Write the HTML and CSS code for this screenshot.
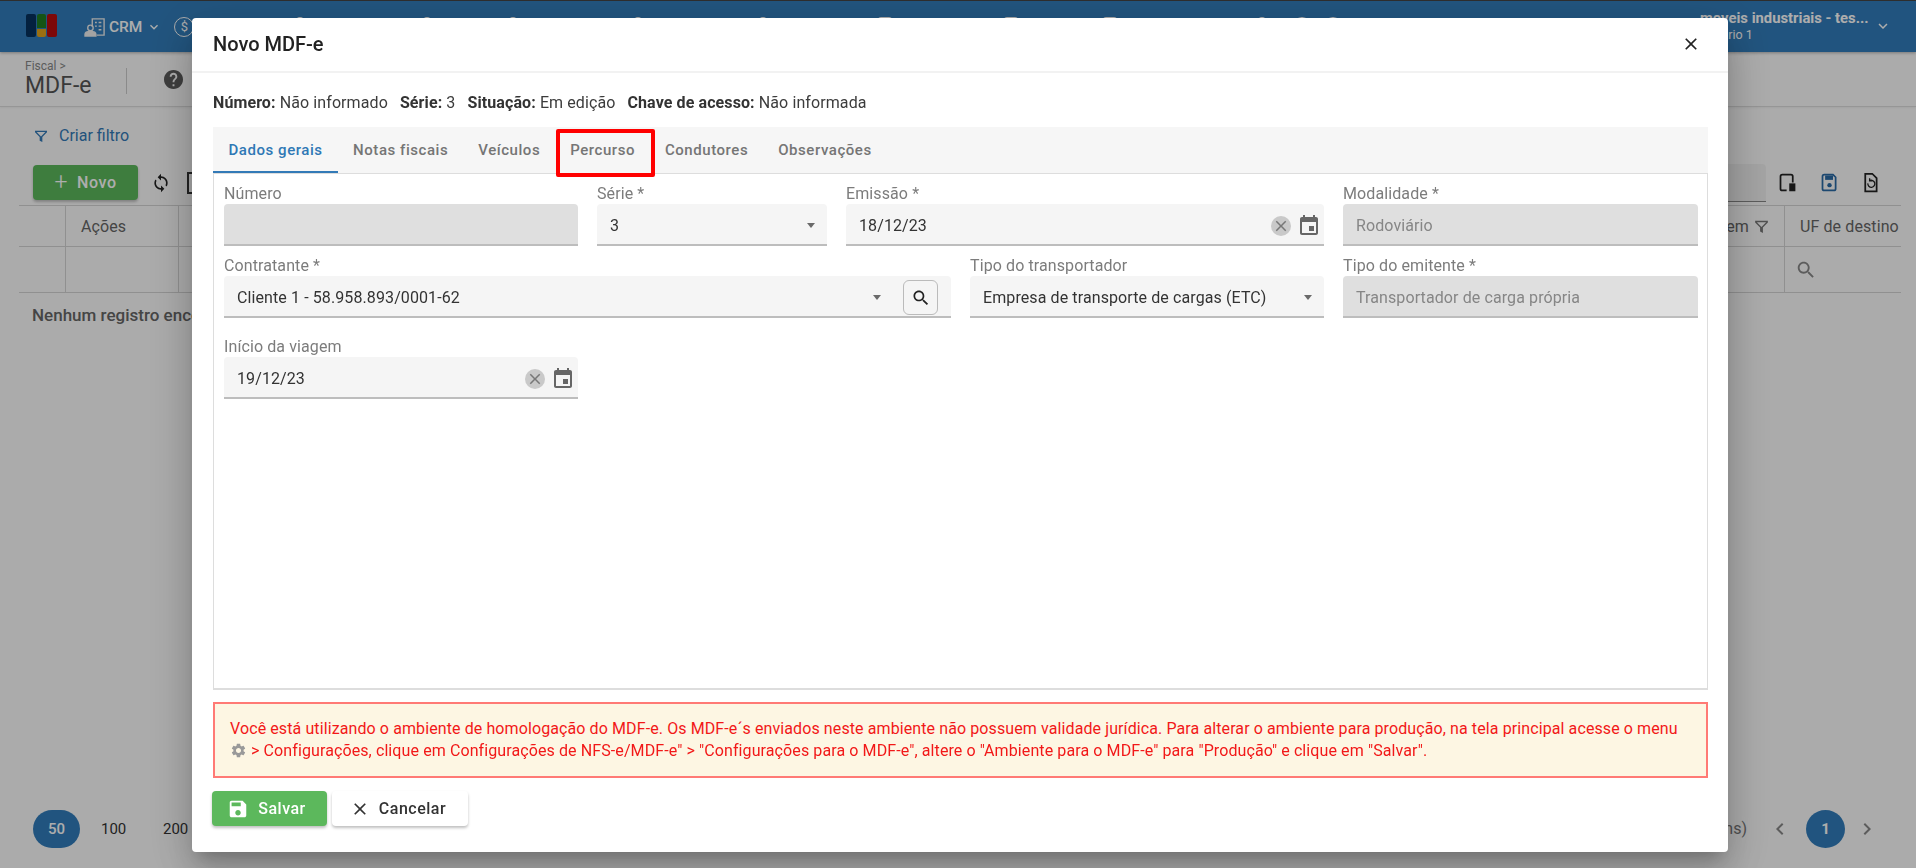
FILE: index.html
```html
<!DOCTYPE html>
<html lang="pt-BR">
<head>
<meta charset="utf-8">
<title>Novo MDF-e</title>
<link rel="stylesheet" href="styles.css">
</head>
<body>
<svg class="sprite" width="0" height="0" aria-hidden="true">
  <symbol id="i-event" viewBox="0 0 24 24"><path d="M17 12h-5v5h5v-5zM16 1v2H8V1H6v2H5c-1.11 0-1.99.9-1.99 2L3 19c0 1.1.89 2 2 2h14c1.1 0 2-.9 2-2V5c0-1.1-.9-2-2-2h-1V1h-2zm3 18H5V8h14v11z"/></symbol>
  <symbol id="i-search" viewBox="0 0 24 24"><path d="M15.5 14h-.79l-.28-.27C15.41 12.59 16 11.11 16 9.5 16 5.91 13.09 3 9.5 3S3 5.91 3 9.5 5.91 16 9.5 16c1.61 0 3.09-.59 4.23-1.57l.27.28v.79l5 4.99L20.49 19l-4.99-5zm-6 0C7.01 14 5 11.99 5 9.5S7.01 5 9.5 5 14 7.01 14 9.5 11.99 14 9.5 14z"/></symbol>
  <symbol id="i-close" viewBox="0 0 24 24"><path d="M19 6.41L17.59 5 12 10.59 6.41 5 5 6.41 10.59 12 5 17.59 6.41 19 12 13.41 17.59 19 19 17.59 13.41 12z"/></symbol>
  <symbol id="i-save" viewBox="0 0 24 24"><path d="M17 3H5c-1.11 0-2 .9-2 2v14c0 1.1.89 2 2 2h14c1.1 0 2-.9 2-2V7l-4-4zm-5 16c-1.66 0-3-1.34-3-3s1.34-3 3-3 3 1.34 3 3-1.34 3-3 3zm3-10H5V5h10v4z"/></symbol>
  <symbol id="i-filter" viewBox="0 0 24 24"><path d="M3 4h18v2.200l-7 7.300V21l-4-2v-5.500L3 6.200V4zm2.500 2 6.500 6.700L18.500 6h-13zM12 15v3.500l.01.01L12 15z"/></symbol>
  <symbol id="i-chev" viewBox="0 0 24 24"><path d="M7.410 8.590 12 13.170l4.590-4.580L18 10l-6 6-6-6z"/></symbol>
</svg>

<div class="page">
  <header class="topbar">
    <div class="logo"><span class="logo-a"></span><span class="logo-b"><i></i><b></b></span><span class="logo-c"></span></div>
    <nav class="menu">
      <svg class="crm-icon" viewBox="0 0 24 22" fill="none" stroke="currentColor" stroke-width="1.500"><path d="M9 11V2h13v18h-8"/><path d="M12 6h2M16 6h3M12 10h2M16 10h3M16 14h3"/><circle cx="7" cy="12" r="3"/><path d="M1 21v-2c0-2 3-3 6-3s6 1 6 3v2z" fill="currentColor"/></svg>
      <span class="menu-label">CRM</span>
      <svg class="menu-chev"><use href="#i-chev"/></svg>
      <span class="money">$</span>
    </nav>
    <div class="peeks">
      <i class="peek"></i><i class="peek"></i><i class="peek"></i><i class="peek"></i><i class="peek"></i><i class="peek wide"></i><i class="peek wide"></i><i class="peek wide"></i><i class="peek"></i><i class="peek ring"></i><i class="peek ring"></i>
    </div>
    <div class="user">
      <div class="user-text">
        <strong>moveis industriais - tes...</strong>
        <span>Usuário 1</span>
      </div>
      <svg class="user-chev"><use href="#i-chev"/></svg>
    </div>
  </header>

  <section class="subhead">
    <div class="crumb"><small>Fiscal &gt;</small><h1>MDF-e</h1></div>
    <span class="vline"></span>
    <svg class="help" viewBox="2 2 20 20"><path d="M12 2C6.480 2 2 6.480 2 12s4.480 10 10 10 10-4.480 10-10S17.520 2 12 2zm1 17h-2v-2h2v2zm2.070-7.750-.9.920C13.450 12.900 13 13.500 13 15h-2v-.5c0-1.100.450-2.100 1.170-2.830l1.240-1.260c.37-.36.59-.86.59-1.410 0-1.100-.9-2-2-2s-2 .9-2 2H8c0-2.210 1.790-4 4-4s4 1.790 4 4c0 .88-.36 1.680-.93 2.250z"/></svg>
  </section>

  <div class="filter-row">
    <svg class="funnel"><use href="#i-filter"/></svg>
    <span>Criar filtro</span>
  </div>

  <div class="toolbar">
    <button class="btn-novo" type="button"><span class="plus">+</span>Novo</button>
    <svg class="tool-sync" viewBox="0 0 24 24"><path d="M12 4V1L8 5l4 4V6c3.310 0 6 2.690 6 6 0 1.010-.25 1.970-.7 2.800l1.460 1.460C19.540 15.030 20 13.570 20 12c0-4.420-3.580-8-8-8zm0 14c-3.310 0-6-2.690-6-6 0-1.010.25-1.970.7-2.800L5.240 7.740C4.460 8.970 4 10.430 4 12c0 4.420 3.580 8 8 8v3l4-4-4-4v3z"/></svg>
    <span class="tool-box"></span>
    <span class="search-field"></span>
    <svg class="tool-ic first" viewBox="0 0 24 24" stroke="#222" stroke-width="2"><path d="M11 21H6a2 2 0 0 1-2-2V5a2 2 0 0 1 2-2h10a2 2 0 0 1 2 2v7"/><rect class="solid" x="14" y="13" width="7" height="9" stroke="none"/></svg>
    <svg class="tool-ic blue" viewBox="0 0 24 24" stroke="#2a6aa5" stroke-width="2"><path d="M6 3h10l3 3v13a2 2 0 0 1-2 2H6a2 2 0 0 1-2-2V5a2 2 0 0 1 2-2z"/><path class="solid-blue" d="M7 4h9v5H7z" stroke="none"/><circle class="solid-blue" cx="12" cy="15" r="2.500" stroke="none"/></svg>
    <svg class="tool-ic end" viewBox="0 0 24 24" stroke="#222" stroke-width="2"><path d="M6 2h8l5 5v15H6z"/><path stroke-width="1.500" d="M9 13a4 4 0 1 0 2-3M11 7v3h3"/></svg>
  </div>

  <div class="table">
    <div class="th"></div>
    <div class="th">Ações</div>
    <div class="th"></div>
    <div class="th th-end">UF de origem <svg class="th-funnel"><use href="#i-filter"/></svg></div>
    <div class="th last">UF de destino</div>
    <div class="td"></div>
    <div class="td"></div>
    <div class="td"></div>
    <div class="td"></div>
    <div class="td last"><svg class="td-search"><use href="#i-search"/></svg></div>
  </div>
  <p class="empty">Nenhum registro encontrado</p>

  <footer class="pager">
    <span class="pill">50</span>
    <span class="size">100</span>
    <span class="size">200</span>
    <span class="total">(0 itens)</span>
    <svg class="arrow" viewBox="0 0 24 24"><path d="M15.410 7.410 14 6l-6 6 6 6 1.410-1.410L10.830 12z"/></svg>
    <span class="page-no">1</span>
    <svg class="arrow" viewBox="0 0 24 24"><path d="M10 6 8.590 7.410 13.170 12l-4.580 4.590L10 18l6-6z"/></svg>
  </footer>
</div>

<div class="overlay"></div>

<div class="modal" role="dialog">
  <div class="modal-head">
    <h2>Novo MDF-e</h2>
    <svg class="modal-x"><use href="#i-close"/></svg>
  </div>
  <div class="modal-body">
    <p class="info">
      <span><b>Número:</b> Não informado</span>
      <span><b>Série:</b> 3</span>
      <span><b>Situação:</b> Em edição</span>
      <span><b>Chave de acesso:</b> Não informada</span>
    </p>

    <div class="tabs">
      <span class="tab active">Dados gerais</span>
      <span class="tab">Notas fiscais</span>
      <span class="tab">Veículos</span>
      <span class="tab">Percurso</span>
      <span class="tab">Condutores</span>
      <span class="tab">Observações</span>
      <span class="mark"></span>
    </div>

    <div class="panel">
      <div class="form">
        <div class="field">
          <label>Número</label>
          <div class="control off"></div>
        </div>
        <div class="field">
          <label>Série *</label>
          <div class="control"><span class="val">3</span><i class="caret"></i></div>
        </div>
        <div class="field s2">
          <label>Emissão *</label>
          <div class="control"><span class="val">18/12/23</span><span class="clear"><svg><use href="#i-close"/></svg></span><svg class="cal"><use href="#i-event"/></svg></div>
        </div>
        <div class="field">
          <label>Modalidade *</label>
          <div class="control off"><span class="val">Rodoviário</span></div>
        </div>

        <div class="field s3">
          <label>Contratante *</label>
          <div class="control"><span class="val">Cliente 1 - 58.958.893/0001-62</span><i class="caret"></i><button class="find" type="button"><svg><use href="#i-search"/></svg></button></div>
        </div>
        <div class="field">
          <label>Tipo do transportador</label>
          <div class="control"><span class="val">Empresa de transporte de cargas (ETC)</span><i class="caret"></i></div>
        </div>
        <div class="field">
          <label>Tipo do emitente *</label>
          <div class="control off"><span class="val">Transportador de carga própria</span></div>
        </div>

        <div class="field third">
          <label>Início da viagem</label>
          <div class="control"><span class="val">19/12/23</span><span class="clear"><svg><use href="#i-close"/></svg></span><svg class="cal"><use href="#i-event"/></svg></div>
        </div>
      </div>
    </div>

    <div class="alert">
      <p>Você está utilizando o ambiente de homologação do MDF-e. Os MDF-e´s enviados neste ambiente não possuem validade jurídica. Para alterar o ambiente para produção, na tela principal acesse o menu</p>
      <p><svg class="gear" viewBox="0 0 24 24"><path d="M19.140 12.940c.04-.3.06-.61.06-.94 0-.32-.02-.64-.07-.94l2.030-1.580c.18-.14.23-.41.12-.61l-1.920-3.320c-.12-.22-.37-.29-.59-.22l-2.390.96c-.5-.38-1.030-.7-1.620-.94l-.36-2.540c-.04-.24-.24-.41-.48-.41h-3.840c-.24 0-.43.17-.47.41l-.36 2.540c-.59.24-1.130.57-1.620.94l-2.390-.96c-.22-.08-.47 0-.59.22L2.740 8.870c-.12.21-.08.47.12.61l2.030 1.580c-.05.3-.09.63-.09.94s.02.64.07.94l-2.030 1.580c-.18.14-.23.41-.12.61l1.920 3.320c.12.22.37.29.59.22l2.390-.96c.5.38 1.030.7 1.620.94l.36 2.540c.05.24.24.41.48.41h3.840c.24 0 .44-.17.47-.41l.36-2.540c.59-.24 1.130-.56 1.620-.94l2.390.96c.22.08.47 0 .59-.22l1.920-3.320c.12-.22.07-.47-.12-.61l-2.010-1.580zM12 15.600c-1.980 0-3.600-1.620-3.600-3.600s1.620-3.600 3.600-3.600 3.600 1.620 3.600 3.600-1.620 3.600-3.600 3.600z"/></svg> &gt; Configurações, clique em Configurações de NFS-e/MDF-e" &gt; "Configurações para o MDF-e", altere o "Ambiente para o MDF-e" para "Produção" e clique em "Salvar".</p>
    </div>

    <div class="actions">
      <button class="btn-save" type="button"><svg><use href="#i-save"/></svg>Salvar</button>
      <button class="btn-cancel" type="button"><svg><use href="#i-close"/></svg>Cancelar</button>
    </div>
  </div>
</div>
</body>
</html>
```

FILE: styles.css
```css
* { box-sizing: border-box; }
html, body { margin: 0; height: 100%; overflow: hidden; }
body { font-family: Roboto, "Liberation Sans", sans-serif; color: #333; background: #fff; }
p, h1, h2 { margin: 0; font-weight: 400; }
button { font-family: inherit; border: 0; cursor: pointer; }
.sprite { position: absolute; }

/* ---------- page behind the dialog ---------- */
.page { height: 868px; display: flex; flex-direction: column; background: #fdfdfd; }

.topbar {
  height: 52px; flex: none; display: flex; align-items: center;
  padding: 0 24px 0 26px; background: #327dbb; border-top: 1px solid #444;
  color: #fff; box-shadow: 0 1px 3px rgba(0,0,0,.3); position: relative;
}
.logo { display: flex; gap: 1px; width: 31px; height: 23px; margin-top: -2px; flex: none; }
.logo-a, .logo-c { display: block; width: 10px; border-radius: 2px; }
.logo-a { background: #06325e; }
.logo-c { background: #b80c0c; }
.logo-b { display: flex; flex-direction: column; gap: 1px; width: 9px; }
.logo-b i { flex: 1 1 65%; background: #1f7d1f; display: block; border-radius: 2px 2px 0 0; }
.logo-b b { flex: 1 1 35%; background: #e3a21a; display: block; border-radius: 0 0 2px 2px; }

.menu { display: flex; align-items: center; margin-left: 27px; width: 125px; flex: none; }
.crm-icon { width: 22px; height: 20px; color: #f0f0f0; flex: none; }
.menu-label { margin-left: 3px; font-size: 15.500px; font-weight: 500; }
.menu-chev { width: 16px; height: 16px; margin-left: 4px; fill: #fff; }
.money {
  width: 20px; height: 20px; margin-left: 12px; border: 1.500px solid #fff; border-radius: 50%;
  font-size: 13px; line-height: 17px; text-align: center; flex: none;
}
.peeks {
  flex: 1; display: grid; margin-left: 87px;
  grid-template-columns: 127px 86px 125px 125px 119px 126px 99px 155px 35px 31px 20px;
}
.peek { display: block; width: 8px; height: 20px; background: #fff; border-radius: 4px; }
.peek.wide { width: 14px; border-radius: 3px; }
.peek.ring { width: 18px; height: 18px; background: none; border: 2px solid #fff; border-radius: 50%; }

.user { display: flex; align-items: center; gap: 2px; margin-top: -2px; }
.user-text { width: 172px; display: flex; flex-direction: column; }
.user-text strong { font-size: 14.800px; font-weight: 700; line-height: 18px; white-space: nowrap; }
.user-text span { font-size: 12.500px; line-height: 15px; }
.user-chev { width: 18px; height: 18px; fill: #fff; }

.subhead {
  height: 55px; flex: none; display: flex; align-items: center; padding-left: 25px;
  background: #fdfdfd; border-bottom: 1px solid #ddd; box-shadow: 0 1px 2px rgba(0,0,0,.06);
}
.crumb { width: 101px; }
.crumb small { display: block; font-size: 12px; line-height: 13px; color: #888; }
.crumb h1 { font-size: 23px; line-height: 26px; color: #555; }
.vline { width: 1px; height: 26px; background: #ccc; margin-top: 4px; }
.help { width: 19px; height: 19px; margin-left: 37px; fill: #5c5c5c; }

.filter-row {
  height: 57px; flex: none; display: flex; align-items: center; gap: 10px; padding-left: 33px;
  font-size: 16px; color: #337ab7;
}
.funnel { width: 16px; height: 16px; fill: #337ab7; }

.toolbar { height: 41px; flex: none; display: flex; align-items: flex-start; padding-left: 33px; }
.btn-novo {
  width: 105px; height: 35px; background: #5cb85c; color: #fff; border-radius: 4px; font-size: 16px;
  font-weight: 500; letter-spacing: .6px; display: flex; align-items: center; justify-content: center; gap: 9px;
  box-shadow: 0 2px 3px rgba(0,0,0,.25); margin-top: 1px;
}
.plus { font-size: 23px; font-weight: 300; line-height: 20px; }
.tool-sync { width: 20px; height: 20px; margin: 9px 0 0 13px; fill: #222; }
.tool-box { width: 14px; height: 22px; margin: 8px 0 0 16px; border: 2px solid #333; }
.search-field { margin-left: auto; width: 350px; height: 38px; background: #f2f2f2; border-bottom: 1px solid #888; border-radius: 4px 4px 0 0; }
.tool-ic { width: 21px; height: 21px; margin-top: 8px; fill: none; flex: none; }
.tool-ic.first { margin-left: 11px; }
.tool-ic.blue { margin-left: 21px; }
.tool-ic.end { margin: 8px 35px 0 20px; }
.solid { fill: #222; }
.solid-blue { fill: #2a6aa5; }

.table {
  margin: 0 15px 0 19px; display: grid; flex: none;
  grid-template-columns: 47px 113px 1fr 145px 116px;
  grid-template-rows: 41px 46px;
  border-top: 1px solid #d5d5d5;
}
.th, .td {
  border-right: 1px solid #d5d5d5; border-bottom: 1px solid #d5d5d5; padding: 0 15px;
  display: flex; align-items: center; font-size: 16px; letter-spacing: .1px; color: #666; white-space: nowrap; overflow: hidden;
}
.th.last, .td.last { border-right: 0; }
.th-end { gap: 4px; justify-content: flex-end; padding: 0 14px 0 0; }
.th-funnel { width: 17px; height: 17px; fill: #777; flex: none; }
.td-search { width: 22px; height: 22px; fill: #888; margin-left: -5px; }
.empty { margin: 12px 0 0 32px; font-size: 17px; line-height: 20px; font-weight: 500; color: #666; }

.pager { margin-top: auto; height: 58px; flex: none; display: flex; align-items: flex-start; padding: 0 37px 0 33px; font-size: 15px; color: #333; }
.pill { width: 47px; height: 38px; background: #327dbb; color: #fff; border-radius: 19px; display: flex; align-items: center; justify-content: center; font-weight: 500; }
.size { margin-left: 21px; width: 41px; line-height: 38px; }
.total { margin-left: auto; line-height: 38px; color: #777; font-size: 16px; }
.arrow { width: 24px; height: 24px; margin-top: 7px; fill: #888; margin-left: 21px; }
.page-no { width: 39px; height: 38px; margin-left: 14px; border-radius: 50%; background: #327dbb; color: #fff; display: flex; align-items: center; justify-content: center; font-weight: 700; }
.page-no + .arrow { margin-left: 10px; }

/* ---------- overlay and dialog ---------- */
.overlay { position: fixed; inset: 0; background: rgba(0,0,0,.32); }

.modal {
  position: fixed; left: 192px; top: 18px; width: 1536px; height: 834px;
  display: flex; flex-direction: column; background: #fff; border-radius: 4px;
  box-shadow: 0 11px 15px -7px rgba(0,0,0,.2), 0 24px 38px 3px rgba(0,0,0,.14), 0 9px 46px 8px rgba(0,0,0,.12);
}
.modal-head {
  height: 55px; flex: none; display: flex; align-items: center; justify-content: space-between;
  padding: 0 27px 2px 21px; border-bottom: 2px solid #f2f2f2;
}
.modal-head h2 { font-size: 20px; font-weight: 500; color: #222; }
.modal-x { width: 20px; height: 20px; fill: #222; }

.modal-body { flex: 1; display: flex; flex-direction: column; padding: 0 20px 0 21px; }
.info { height: 54px; flex: none; display: flex; align-items: center; gap: 12px; font-size: 16px; letter-spacing: .1px; color: #3c3c3c; padding-top: 4px; }
.info b { font-weight: 700; color: #333; }

.tabs { position: relative; height: 46px; flex: none; display: flex; background: #f6f6f6; }
.tab { padding: 0 15px; display: flex; align-items: center; font-size: 15px; font-weight: 500; letter-spacing: .55px; color: #757575; }
.tab.active { color: #2f78b5; border-bottom: 2px solid #337ab7; padding: 2px 15.500px 0; }
.mark {
  position: absolute; left: 343px; top: 2px; width: 99px; height: 48px;
  border: 4px solid #f00; border-radius: 2px;
}

.panel { height: 517px; flex: none; border: 1px solid #ddd; border-bottom-width: 2px; padding: 8px 9px 0 10px; }
.form { display: grid; grid-template-columns: 354px 230px 105px 354px 1fr; column-gap: 19px; row-gap: 8px; }
.s2 { grid-column: span 2; }
.s3 { grid-column: span 3; }
.third { grid-column: 1; margin-top: 9px; }
.field label { display: block; height: 22px; font-size: 16px; letter-spacing: .1px; line-height: 23px; color: #7c7c7c; }
.control {
  height: 42px; display: flex; align-items: center; padding: 3px 9px 0 13px; background: #f5f5f5;
  border-bottom: 2px solid #bdbdbd; border-radius: 4px 4px 0 0; font-size: 16px; letter-spacing: .1px; color: #333;
}
.control.off { background: #dfdfdf; color: #868686; }
.val { flex: 1; }
.caret { width: 0; height: 0; border: 4px solid transparent; border-top-width: 5px; border-top-color: #6a6a6a; border-bottom-width: 0; margin-right: 3px; }
.clear { width: 20px; height: 20px; border-radius: 50%; background: #c9c9c9; display: flex; align-items: center; justify-content: center; margin-right: 6px; }
.clear svg { width: 18px; height: 18px; fill: #777; }
.cal { width: 24px; height: 24px; fill: #666; margin-right: -6px; }
.find {
  width: 35px; height: 35px; margin: 0 4px 0 19px; background: #f5f5f5; border: 1px solid #bbb; border-radius: 6px;
  display: flex; align-items: center; justify-content: center; padding: 0;
}
.find svg { width: 20px; height: 20px; fill: #222; }

.alert {
  margin-top: 12px; height: 76px; flex: none; display: flex; flex-direction: column; justify-content: center;
  border: 2px solid #ff7a75; background: #fdf6e3; padding: 0 15px; font-size: 16px; letter-spacing: .1px; line-height: 22px; color: #f21818;
}
.gear { width: 17px; height: 17px; fill: #999; vertical-align: -3px; }

.actions { margin-top: 13px; display: flex; gap: 5px; margin-left: -1px; }
.btn-save, .btn-cancel {
  height: 35px; border-radius: 4px; display: flex; align-items: center; justify-content: center;
  font-size: 16px; font-weight: 500; letter-spacing: .5px; box-shadow: 0 2px 3px rgba(0,0,0,.25);
}
.btn-save { width: 115px; background: #5cb85c; color: #fff; gap: 9px; padding-right: 12px; }
.btn-save svg { width: 22px; height: 22px; fill: #fff; }
.btn-cancel { width: 136px; background: #fff; color: #333; gap: 9px; padding-right: 10px; }
.btn-cancel svg { width: 20px; height: 20px; fill: #333; }
```
